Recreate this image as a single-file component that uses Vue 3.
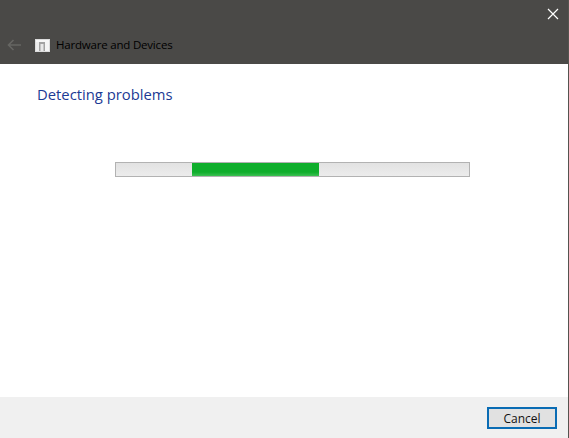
<script setup>
const title = 'Hardware and Devices'
</script>

<template>
  <div class="win">
    <header class="head">
      <button class="close" aria-label="Close">
        <svg width="12" height="12" viewBox="0 0 12 12"><path d="M1 1 11 11M11 1 1 11" stroke="#fff" stroke-width="1.2" fill="none"/></svg>
      </button>
      <div class="nav">
        <svg class="back" width="14" height="12" viewBox="0 0 14 12"><path d="M6.5 1 1.5 6l5 5M1.5 6H14" stroke="#666663" stroke-width="1.6" fill="none"/></svg>
        <svg class="app" width="15" height="13" viewBox="0 0 15 13">
          <rect width="15" height="13" fill="#dcdcdc"/>
          <rect x="1" y="1" width="13" height="2" fill="#f6f6f6"/>
          <rect x="1" y="3" width="3" height="9" fill="#ececec"/>
          <rect x="4" y="3" width="6" height="9" fill="#a2a2a2"/>
          <rect x="5.5" y="5" width="3" height="7" fill="#e8e8e8"/>
          <rect x="10" y="3" width="4" height="9" fill="#f4f4f4"/>
        </svg>
        <span class="title">{{ title }}</span>
      </div>
    </header>
    <main class="body">
      <h1 class="heading">Detecting problems</h1>
      <div class="track"><div class="fill"></div></div>
    </main>
    <footer class="foot">
      <button class="cancel">Cancel</button>
    </footer>
  </div>
</template>

<style scoped>
.win {
  width: 569px;
  height: 438px;
  box-sizing: border-box;
  display: flex;
  flex-direction: column;
  background: #fff;
  border-right: 1px solid #55544f;
  font-family: "Open Sans", "Noto Sans", sans-serif;
}
.head {
  height: 64px;
  flex: none;
  background: #4a4947;
  display: flex;
  flex-direction: column;
  position: relative;
}
.close {
  position: absolute;
  top: 8px;
  right: 9px;
  width: 12px;
  height: 12px;
  padding: 0;
  border: 0;
  background: none;
  display: flex;
}
.nav {
  margin-top: 38px;
  height: 14px;
  display: flex;
  align-items: center;
  padding-left: 7px;
}
.back { flex: none; }
.app { flex: none; margin-left: 14px; }
.title {
  margin-left: 6px;
  font-size: 11.5px;
  line-height: 14px;
  color: #000;
  letter-spacing: -0.2px;
  white-space: nowrap;
}
.body {
  flex: 1;
  display: flex;
  flex-direction: column;
  padding: 19px 0 0 37px;
}
.heading {
  margin: 0;
  font-size: 14.8px;
  line-height: 22px;
  font-weight: 400;
  color: #1c3a94;
  white-space: nowrap;
}
.track {
  margin: 57px 0 0 78px;
  width: 355px;
  height: 15px;
  box-sizing: border-box;
  border: 1px solid #b2b2b2;
  background: linear-gradient(#e2e2e2, #ececec);
  display: flex;
  padding-left: 76px;
}
.fill {
  width: 127px;
  height: 13px;
  background: linear-gradient(#0fae2c 0 70%, #3cc052 100%);
}
.foot {
  height: 41px;
  flex: none;
  background: #f0f0f0;
  display: flex;
  justify-content: flex-end;
  padding: 10px 11px 0 0;
  box-sizing: border-box;
}
.cancel {
  width: 70px;
  height: 22px;
  box-sizing: border-box;
  border: 2px solid #0a6cb4;
  background: #e1e1e1;
  font: 12px "Open Sans", "Noto Sans", sans-serif;
  color: #111;
  padding: 0;
}
</style>
